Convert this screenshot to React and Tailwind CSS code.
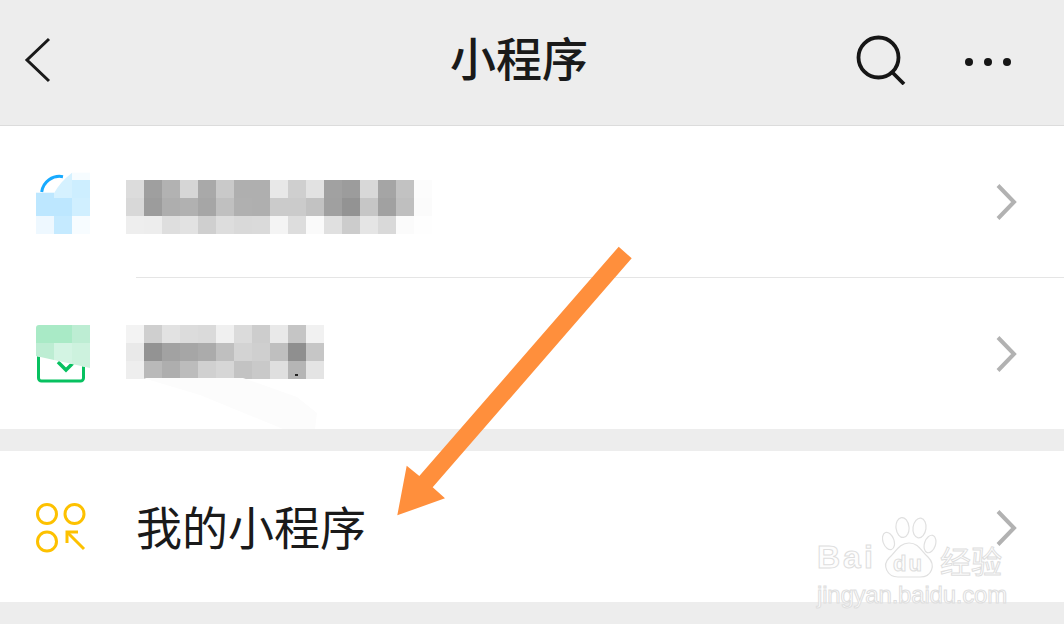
const cjk = 'font-["Liberation_Sans","Noto_Sans_CJK_SC",sans-serif]';

const mosaicOne = [
  ['#dcdcdc', '#9f9f9f', '#b2b2b2', '#d6d6d6', '#a9a9a9', '#c9c9c9', '#afafaf', '#afafaf', '#e8e8e8', '#cfcfcf', '#e2e2e2', '#a1a1a1', '#9c9c9c', '#d8d8d8', '#a5a5a5', '#c2c2c2', '#fcfcfc'],
  ['#d8d8d8', '#9c9c9c', '#aeaeae', '#b1b1b1', '#a6a6a6', '#c0c0c0', '#b0b0b0', '#afafaf', '#cbcbcb', '#cbcbcb', '#c2c2c2', '#a0a0a0', '#939393', '#c6c6c6', '#a1a1a1', '#bfbfbf', '#fbfbfb'],
  ['#eeeeee', '#ededed', '#dedede', '#e2e2e2', '#cfcfcf', '#dddddd', '#d9d9d9', '#dadada', '#f4f4f4', '#dddddd', '#fafafa', '#e0e0e0', '#cccccc', '#e5e5e5', '#d9d9d9', '#fbfbfb', '#fefefe'],
];

const mosaicTwo = [
  ['#f3f3f3', '#cfcfcf', '#e2e2e2', '#dcdcdc', '#dadada', '#f0f0f0', '#dbdbdb', '#cdcdcd', '#e9e9e9', '#c5c5c5', '#f1f1f1'],
  ['#e9e9e9', '#939393', '#a2a2a2', '#a6a6a6', '#ababab', '#bfbfbf', '#d3d3d3', '#cfcfcf', '#bfbfbf', '#8f8f8f', '#c6c6c6'],
  ['#eeeeee', '#b9b9b9', '#aeaeae', '#bcbcbc', '#d0d0d0', '#d6d6d6', '#c3c3c3', '#c9c9c9', '#dfdfdf', '#b5b5b5', '#e4e4e4'],
];

function Mosaic({ cells }) {
  return (
    <div className="flex flex-col">
      {cells.map((row, y) => (
        <div key={y} className="flex">
          {row.map((color, x) => (
            <div key={x} className="w-[18px] h-[18px]" style={{ backgroundColor: color }} />
          ))}
        </div>
      ))}
    </div>
  );
}

function BlueIcon() {
  return (
    <svg width="54" height="62" viewBox="0 0 54 62" className="shrink-0">
      <path d="M5.7 20 A18 18 0 0 1 27 4.7" fill="none" stroke="#18aaff" strokeWidth="3" />
      <path d="M18 21.3 Q24 10 36 0.7 L36 26 L18 26 Z" fill="#d5f1ff" />
      <rect x="36" y="0.7" width="18" height="7.3" fill="#f6fcff" />
      <rect x="36" y="8" width="18" height="18" fill="#cdeeff" />
      <rect x="0" y="20.7" width="18" height="23.3" fill="#bde7ff" />
      <rect x="18" y="26" width="18" height="18" fill="#bde7ff" />
      <rect x="36" y="26" width="18" height="18" fill="#d0efff" />
      <rect x="0" y="44" width="18" height="18" fill="#eef8ff" />
      <rect x="18" y="44" width="18" height="18" fill="#c5eaff" />
      <rect x="36" y="44" width="18" height="18" fill="#f7fcff" />
    </svg>
  );
}

function GreenIcon() {
  return (
    <svg width="54" height="58" viewBox="0 0 54 58" className="shrink-0">
      <rect x="2.5" y="18" width="45" height="38" rx="3" fill="#fff" stroke="#07c160" strokeWidth="3" />
      <path d="M22 37 L30 45 L38 37" fill="none" stroke="#07c160" strokeWidth="3.5" />
      <path d="M0 31 L54 43 L54 0 L3 0 Q0 0 0 3 Z" fill="#fff" />
      <path d="M3 0 L36 0 L36 18 L0 18 L0 3 Q0 0 3 0 Z" fill="#a9eac6" />
      <rect x="36" y="0" width="18" height="18" fill="#bdedd3" />
      <path d="M0 18 L18 18 L18 35 L0 31 Z" fill="#bdedd3" />
      <path d="M18 18 L36 18 L36 39 L18 35 Z" fill="#d3f4e3" />
      <path d="M36 18 L54 18 L54 43 L36 39 Z" fill="#cdf2de" />
    </svg>
  );
}

function MineIcon() {
  return (
    <svg width="50" height="50" viewBox="0 0 50 50" fill="none" stroke="#fdc100" strokeWidth="3" className="shrink-0">
      <circle cx="11" cy="11" r="9.5" />
      <circle cx="38.5" cy="11" r="9.5" />
      <circle cx="11" cy="38.5" r="9.5" />
      <path d="M31 29 L48 46" />
      <path d="M31 40 L31 29 L42 29" />
    </svg>
  );
}

function RowChevron({ className }) {
  return (
    <svg width="24" height="40" viewBox="0 0 24 40" fill="none" stroke="#b2b2b2" strokeWidth="4" className={`shrink-0 ${className}`}>
      <path d="M3 3.5 L19 20 L3 36.5" />
    </svg>
  );
}

function Watermark() {
  const outline = 'absolute leading-none whitespace-nowrap text-[#fdfdfd] [-webkit-text-stroke:1px_#dedede]';
  return (
    <div className="absolute left-[815px] top-[515px] w-[195px] h-[95px]">
      <svg width="55" height="61" viewBox="0 0 55 61" fill="#fefefe" stroke="#e0e0e0" strokeWidth="1.2" className="absolute left-[67px] top-[2px]">
        <ellipse cx="6.5" cy="24" rx="5.5" ry="9" transform="rotate(-20 6.5 24)" />
        <ellipse cx="20.5" cy="10.5" rx="6.5" ry="10" transform="rotate(-6 20.5 10.5)" />
        <ellipse cx="37.5" cy="11" rx="6.5" ry="10" transform="rotate(8 37.5 11)" />
        <ellipse cx="48" cy="27" rx="5.5" ry="9" transform="rotate(18 48 27)" />
        <path d="M27 26 C37 26 39 34 46 40 C54 48 50 60 38 60 C32 60 22 60 16 60 C5 60 0 48 7 41 C14 35 17 26 27 26 Z" />
      </svg>
      <div className={`${outline} left-[78px] top-[38px] text-[22px] font-bold tracking-[2px]`}>du</div>
      <div className={`${outline} left-[2px] top-[26px] text-[32px] font-bold tracking-[3px]`}>Bai</div>
      <div className={`${outline} left-[125px] top-[32px] text-[31px]`}>经验</div>
      <div className={`${outline} left-[2px] top-[68px] text-[24px] tracking-[-0.2px]`}>jingyan.baidu.com</div>
    </div>
  );
}

function Overlay() {
  return (
    <svg width="1064" height="624" viewBox="0 0 1064 624" className="absolute left-0 top-0 pointer-events-none">
      <polygon points="143,378 243,378 297,397 317,413 315,429 283,429 200,395" fill="#fcfcfc" />
      <rect x="295" y="374" width="3" height="2" fill="#222222" />
      <polygon
        points="618.7,246.7 631.7,258.3 432.7,487.3 445,498.3 397.3,515.3 406.7,465.7 419.3,476"
        fill="#ff8f3c"
      />
    </svg>
  );
}

function Row({ icon, children, chevron }) {
  return (
    <div className="flex items-center h-[151px] bg-white pl-9 pr-[45px]">
      {icon}
      <div className="flex-1 min-w-0">{children}</div>
      <RowChevron className={chevron} />
    </div>
  );
}

export default function App() {
  return (
    <div className={`relative w-[1064px] h-[632px] bg-white overflow-hidden ${cjk}`}>
      <header className="flex items-center h-[126px] bg-[#ededed] border-b border-[#dcdcdc] pb-[5px]">
        <div className="w-[450px] pl-[24px]">
          <svg width="28" height="46" viewBox="0 0 28 46" fill="none" stroke="#1a1a1a" strokeWidth="3">
            <path d="M25 2 L3 23 L25 44" />
          </svg>
        </div>
        <h1 className="text-[46px] leading-none font-medium text-[#1a1a1a]">小程序</h1>
        <div className="flex items-center ml-auto pr-[53px]">
          <svg width="50" height="50" viewBox="0 0 50 50" fill="none" stroke="#161616" strokeWidth="3.8">
            <circle cx="22.5" cy="22.5" r="20" />
            <path d="M36 37 L48 49" />
          </svg>
          <div className="flex items-center gap-[11px] ml-[59px] mt-[4px]">
            <span className="w-2 h-2 rounded-full bg-[#161616]" />
            <span className="w-2 h-2 rounded-full bg-[#161616]" />
            <span className="w-2 h-2 rounded-full bg-[#161616]" />
          </div>
        </div>
      </header>

      <Row icon={<div className="mt-[3px] w-[54px]"><BlueIcon /></div>}>
        <div className="ml-9 mt-[11px]"><Mosaic cells={mosaicOne} /></div>
      </Row>
      <div className="bg-white pl-[136px]"><div className="h-px bg-[#e5e5e5]" /></div>
      <Row icon={<div className="w-[54px]"><GreenIcon /></div>}>
        <div className="ml-9 mb-[4px]"><Mosaic cells={mosaicTwo} /></div>
      </Row>
      <div className="h-[22px] bg-[#ededed]" />
      <Row chevron="mt-[3px]" icon={<div className="w-[50px] mr-[50px] mt-[3px]"><MineIcon /></div>}>
        <span className="block text-[46px] leading-none text-[#1a1a1a] mt-[4px]">我的小程序</span>
      </Row>
      <div className="h-[22px] bg-[#ededed]" />

      <Overlay />
      <Watermark />
    </div>
  );
}
